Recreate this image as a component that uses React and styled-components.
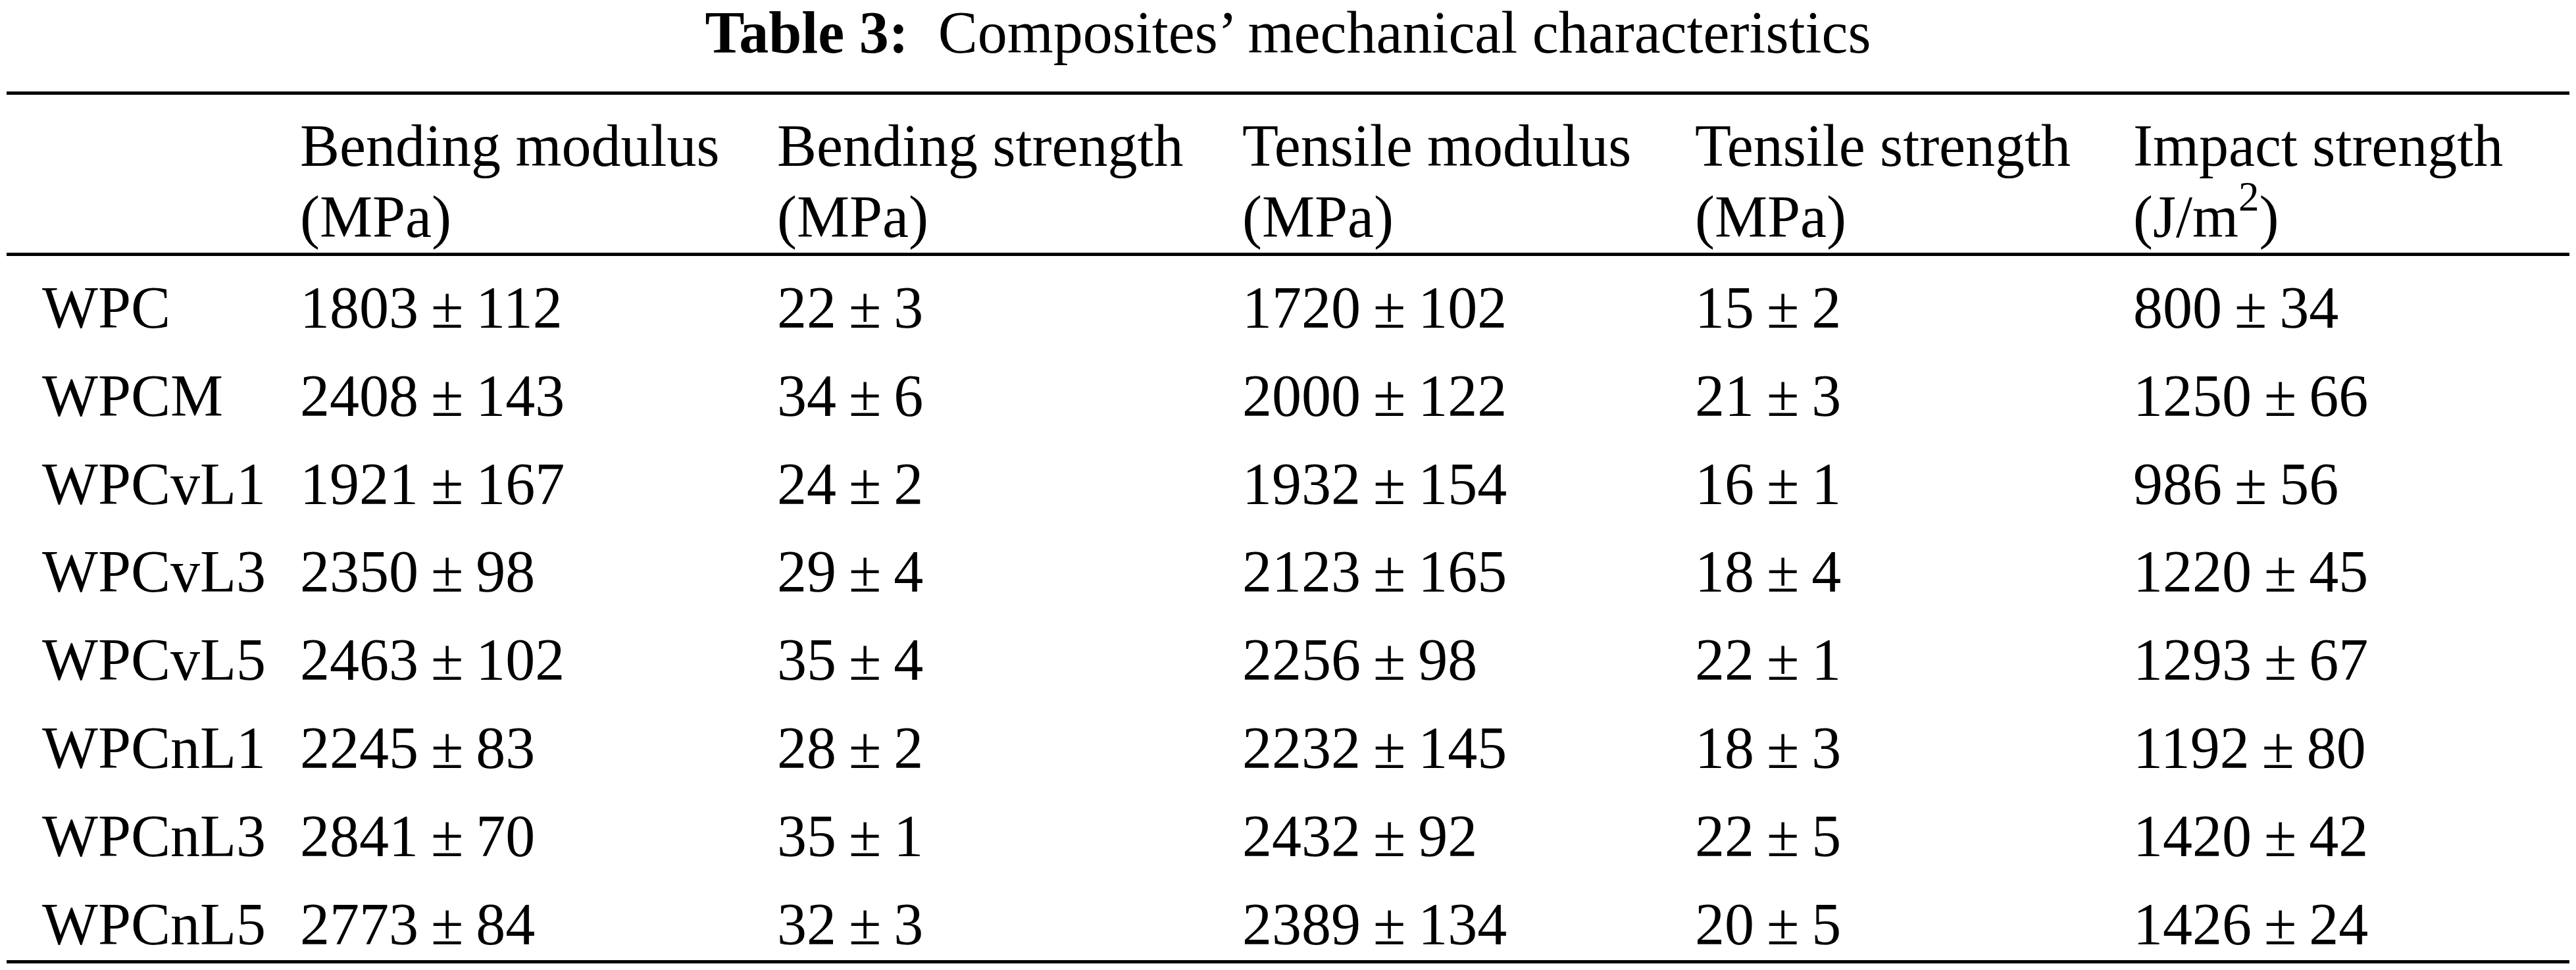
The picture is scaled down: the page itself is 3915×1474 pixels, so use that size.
import React from 'react'
import styled, { createGlobalStyle } from 'styled-components'

const GlobalStyle = createGlobalStyle`
    html, body {
        margin: 0;
        padding: 0;
        background: #ffffff;
    }
    body {
        font-family: "Liberation Serif", "Times New Roman", serif;
        color: #000000;
    }
`

const COLUMNS = '392px 725px 707px 688px 666px 1fr'

const headers = [
    ['Bending modulus', '(MPa)'],
    ['Bending strength', '(MPa)'],
    ['Tensile modulus', '(MPa)'],
    ['Tensile strength', '(MPa)'],
    ['Impact strength', 'jm2'],
]

const rows = [
    ['WPC', [[1803, 112], [22, 3], [1720, 102], [15, 2], [800, 34]]],
    ['WPCM', [[2408, 143], [34, 6], [2000, 122], [21, 3], [1250, 66]]],
    ['WPCvL1', [[1921, 167], [24, 2], [1932, 154], [16, 1], [986, 56]]],
    ['WPCvL3', [[2350, 98], [29, 4], [2123, 165], [18, 4], [1220, 45]]],
    ['WPCvL5', [[2463, 102], [35, 4], [2256, 98], [22, 1], [1293, 67]]],
    ['WPCnL1', [[2245, 83], [28, 2], [2232, 145], [18, 3], [1192, 80]]],
    ['WPCnL3', [[2841, 70], [35, 1], [2432, 92], [22, 5], [1420, 42]]],
    ['WPCnL5', [[2773, 84], [32, 3], [2389, 134], [20, 5], [1426, 24]]],
]

const Unit = ({ text }) => {
    if (text === 'jm2') {
        return <>(J/m<Sup>2</Sup>)</>
    }
    return <>{text}</>
}

export default function App() {
    return (
        <Page>
            <GlobalStyle />
            <Caption>
                <CaptionLabel>Table 3:</CaptionLabel>
                {'  '}Composites’ mechanical characteristics
            </Caption>
            <Table>
                <HeadRow>
                    <HeadCell />
                    {headers.map(([title, unit]) => (
                        <HeadCell key={title}>
                            {title}
                            <br />
                            <Unit text={unit} />
                        </HeadCell>
                    ))}
                </HeadRow>
                <Body>
                    {rows.map(([name, values]) => (
                        <Row key={name}>
                            <Cell>{name}</Cell>
                            {values.map(([v, e], i) => (
                                <Cell key={i}>
                                    {v}
                                    <Pm>±</Pm>
                                    {e}
                                </Cell>
                            ))}
                        </Row>
                    ))}
                </Body>
            </Table>
        </Page>
    )
}

const Page = styled.div`
    width: 3915px;
    height: 1474px;
    box-sizing: border-box;
    font-size: 90px;
`

const Caption = styled.div`
    text-align: center;
    line-height: 100px;
    white-space: pre;
    margin-bottom: 39px;
`

const CaptionLabel = styled.span`
    font-weight: bold;
`

const Table = styled.div`
    margin-left: 10px;
    width: 3895px;
    border-top: 5px solid #000;
    border-bottom: 5px solid #000;
`

const HeadRow = styled.div`
    display: grid;
    grid-template-columns: ${COLUMNS};
    padding: 24px 0 0 54px;
    line-height: 108px;
    border-bottom: 5px solid #000;
`

const HeadCell = styled.div`
    white-space: nowrap;
`

const Sup = styled.span`
    font-size: 0.7em;
    line-height: 0;
    vertical-align: 40px;
`

const Body = styled.div`
    display: flex;
    flex-direction: column;
    gap: 33.8px;
    padding: 29px 0 4.4px;
`

const Row = styled.div`
    display: grid;
    grid-template-columns: ${COLUMNS};
    padding-left: 54px;
    line-height: 100px;
    height: 100px;
`

const Cell = styled.div`
    white-space: nowrap;
`

const Pm = styled.span`
    margin: 0 0.21em;
`
